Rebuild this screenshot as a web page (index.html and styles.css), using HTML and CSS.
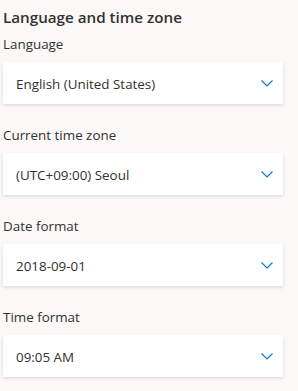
FILE: index.html
```html
<!DOCTYPE html>
<html lang="en">
<head>
    <meta charset="UTF-8">
    <meta name="viewport" content="width=device-width, initial-scale=1.0">
    <title>Language and time zone</title>
    <link rel="stylesheet" href="styles.css">
</head>
<body>
    <div class="panel">
        <h2 class="panel-title">Language and time zone</h2>

        <div class="field">
            <label class="field-label">Language</label>
            <div class="dropdown">
                <span class="dropdown-value">English (United States)</span>
                <svg class="chevron" width="12" height="7" viewBox="0 0 12 7"><path d="M0.5 0.5 L6 6 L11.5 0.5" fill="none" stroke="#0078d4" stroke-width="1.1"/></svg>
            </div>
        </div>

        <div class="field">
            <label class="field-label">Current time zone</label>
            <div class="dropdown">
                <span class="dropdown-value">(UTC+09:00) Seoul</span>
                <svg class="chevron" width="12" height="7" viewBox="0 0 12 7"><path d="M0.5 0.5 L6 6 L11.5 0.5" fill="none" stroke="#0078d4" stroke-width="1.1"/></svg>
            </div>
        </div>

        <div class="field">
            <label class="field-label">Date format</label>
            <div class="dropdown">
                <span class="dropdown-value">2018-09-01</span>
                <svg class="chevron" width="12" height="7" viewBox="0 0 12 7"><path d="M0.5 0.5 L6 6 L11.5 0.5" fill="none" stroke="#0078d4" stroke-width="1.1"/></svg>
            </div>
        </div>

        <div class="field">
            <label class="field-label">Time format</label>
            <div class="dropdown">
                <span class="dropdown-value">09:05 AM</span>
                <svg class="chevron" width="12" height="7" viewBox="0 0 12 7"><path d="M0.5 0.5 L6 6 L11.5 0.5" fill="none" stroke="#0078d4" stroke-width="1.1"/></svg>
            </div>
        </div>
    </div>
</body>
</html>
```

FILE: styles.css
```css
body {
    font-family: "Open Sans", "Noto Sans", sans-serif;
    background-color: #faf9f8;
    color: #323130;
    margin: 0;
    padding: 6px 15px 0 3px;
}

.panel-title {
    font-size: 15.2px;
    font-weight: 600;
    line-height: 22px;
    margin: 0 0 6px 0;
}

.field {
    margin-bottom: 21px;
}

.field-label {
    display: block;
    font-size: 13.4px;
    line-height: 20px;
    margin-bottom: 8px;
}

.dropdown {
    display: flex;
    align-items: center;
    justify-content: space-between;
    height: 42px;
    padding: 0 10px 0 13px;
    background-color: #fff;
    box-shadow: 0 1.6px 3.6px rgba(0, 0, 0, 0.132), 0 0.3px 0.9px rgba(0, 0, 0, 0.108);
    font-size: 13.4px;
}

.dropdown-value {
    padding-top: 2px;
}

.chevron {
    display: block;
}
```
